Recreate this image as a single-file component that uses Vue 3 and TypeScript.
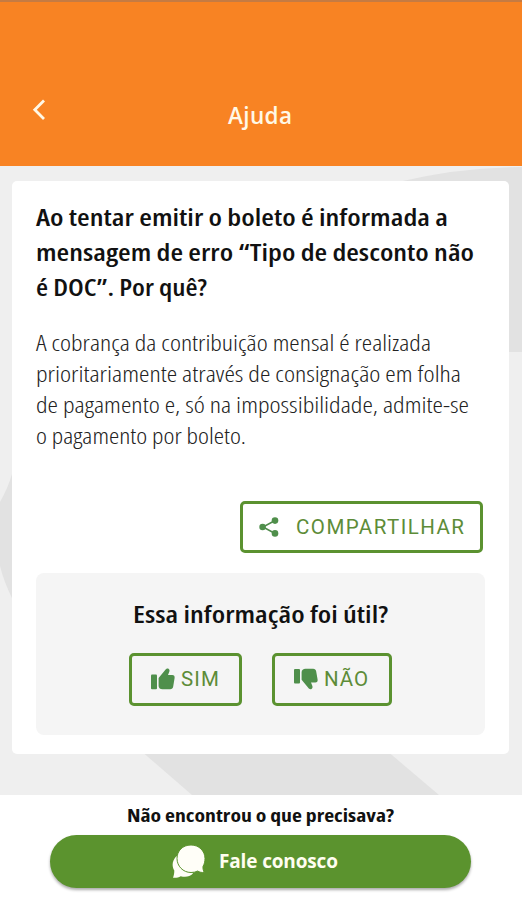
<script setup lang="ts">
interface Line {
  text: string
  width: number
}

const title: Line[] = [
  { text: 'Ao tentar emitir o boleto é informada a', width: 412 },
  { text: 'mensagem de erro “Tipo de desconto não', width: 438 },
  { text: 'é DOC”. Por quê?', width: 171 },
]

const answer: Line[] = [
  { text: 'A cobrança da contribuição mensal é realizada', width: 395 },
  { text: 'prioritariamente através de consignação em folha', width: 425 },
  { text: 'de pagamento e, só na impossibilidade, admite-se', width: 433 },
  { text: 'o pagamento por boleto.', width: 210 },
]
</script>

<template>
  <div class="screen">
    <header class="header">
      <button class="back" aria-label="Voltar">
        <svg width="14" height="24" viewBox="0 0 14 24">
          <path d="M12 2.500 2.800 11.700l9.200 9.200" fill="none" stroke="#fff8e6" stroke-width="2.800" />
        </svg>
      </button>
      <svg class="label name" width="66" height="32">
        <text x="0" y="22" textLength="64">Ajuda</text>
      </svg>
    </header>

    <main class="content">
      <svg class="backdrop" width="522" height="629" viewBox="0 0 522 629">
        <path d="M398 16Q460 1 522 1V186H398Z" />
        <path d="M0 336Q8 322 12 308V432Q4 416 0 400Z" />
        <path d="M140 584H386L439 629H192Z" />
      </svg>

      <article class="card">
        <h1 class="title">
          <svg v-for="line in title" :key="line.text" class="label" width="449" height="35">
            <text x="0" y="25" :textLength="line.width" lengthAdjust="spacingAndGlyphs">{{ line.text }}</text>
          </svg>
        </h1>
        <p class="answer">
          <svg v-for="line in answer" :key="line.text" class="label" width="449" height="30.9">
            <text x="0" y="22" :textLength="line.width" lengthAdjust="spacingAndGlyphs">{{ line.text }}</text>
          </svg>
        </p>

        <button class="outline share">
          <svg width="20" height="20" viewBox="0 0 20 20" class="icon">
            <path d="M16 3.5 4 10l12 6.500" fill="none" stroke="#4f8a4b" stroke-width="1.5" />
            <circle cx="16" cy="3.600" r="3.300" />
            <circle cx="3.600" cy="10" r="3.300" />
            <circle cx="16" cy="16.400" r="3.300" />
          </svg>
          <svg class="label" width="168" height="24">
            <text x="0" y="18.500" textLength="168">COMPARTILHAR</text>
          </svg>
        </button>

        <section class="feedback">
          <svg class="label question" width="256" height="34">
            <text x="0" y="25" textLength="255" lengthAdjust="spacingAndGlyphs">Essa informação foi útil?</text>
          </svg>
          <div class="choices">
            <button class="outline yes">
              <svg class="icon" width="24" height="22" viewBox="0 0 24 22">
                <rect x="0" y="6.5" width="6" height="14.8" rx="1" />
                <path d="M7.6 10 14 2.200c1-1.500 2.400-2.200 3.500-1.500 1.300.8 1.200 2.200.6 3.500L17 7h4.300c1.700 0 2.600 1.300 2.300 3l-1.400 8.500c-.3 1.700-1.400 2.700-3 2.700h-7.700c-2.200 0-3.900-1.300-3.900-3.300Z" />
              </svg>
              <svg class="label" width="38" height="24">
                <text x="0" y="18.500" textLength="38">SIM</text>
              </svg>
            </button>
            <button class="outline no">
              <svg class="icon" width="24" height="22" viewBox="0 0 24 22">
                <rect x="0" y="1" width="6" height="14.500" rx="1" />
                <path d="M7.600 11.800V4.200c0-2 1.700-3.400 3.900-3.400h7.700c1.600 0 2.700 1 3 2.700l1.400 8c.3 1.800-.6 3.100-2.300 3.100H17l1.200 2.800c.6 1.400.5 2.700-.7 3.500-1.200.7-2.500 0-3.500-1.400Z" />
              </svg>
              <svg class="label" width="44" height="24">
                <text x="0" y="18.500" textLength="44">NÃO</text>
              </svg>
            </button>
          </div>
        </section>
      </article>
    </main>

    <footer class="footer">
      <svg class="label hint" width="268" height="30">
        <text x="0" y="22" textLength="267" lengthAdjust="spacingAndGlyphs">Não encontrou o que precisava?</text>
      </svg>
      <button class="contact">
        <svg width="34" height="35" viewBox="0 0 34 35">
          <path class="bubble" d="M4.500 12C-.2 17-.2 22.500 2.300 26.500c0 2.800-.4 5-1.300 7.200 3.200.3 5.500-.3 7.700-1.500 5 1.300 9 .5 12.300-2.700Z" />
          <path class="bubble front" d="M19 1C10.500 1 5 7 5 14.500S11 28.500 19 28.500c2.500 0 4.800-.5 6.700-1.500 1.700 1.200 4 1.700 6.600 1.400-1-1.700-1.500-3.800-1.300-6 1.300-2.200 2-4.800 2-7.900C33 7 27 1 19 1Z" />
        </svg>
        <svg class="label" width="120" height="30">
          <text x="0" y="21" textLength="119">Fale conosco</text>
        </svg>
      </button>
    </footer>
  </div>
</template>

<style>
body {
  margin: 0;
}
</style>

<style scoped>
.screen {
  width: 522px;
  height: 900px;
  display: flex;
  flex-direction: column;
  overflow: hidden;
  background: #fff;
  font-family: "Open Sans", "Noto Sans", sans-serif;
}
button {
  display: flex;
  align-items: center;
  box-sizing: border-box;
  margin: 0;
  padding: 0;
  border: 0;
  background: none;
  font: inherit;
}
svg {
  display: block;
  flex: none;
}
.label {
  overflow: visible;
}
.header {
  box-sizing: border-box;
  height: 166px;
  border-top: 2px solid #c57b43;
  background: #f88323;
  display: flex;
  align-items: flex-start;
}
.back {
  margin: 96px 0 0 32px;
}
.name {
  margin: 100px 0 0 182px;
  font-size: 22.5px;
  font-weight: 600;
  font-stretch: 88%;
  fill: #fff8e6;
}
.content {
  position: relative;
  box-sizing: border-box;
  height: 629px;
  padding: 15px 13px 0 12px;
  background: #efefef;
}
.backdrop {
  position: absolute;
  inset: 0;
  fill: #e2e2e2;
}
.card {
  position: relative;
  box-sizing: border-box;
  height: 573px;
  padding: 20px 24px 0;
  border-radius: 5px;
  background: #fff;
  display: flex;
  flex-direction: column;
}
.title {
  margin: 0;
  font-size: 23.5px;
  font-weight: 600;
  font-stretch: 75%;
  fill: #111;
}
.answer {
  margin: 23px 0 0;
  font-size: 21.5px;
  font-weight: 300;
  font-stretch: 75%;
  fill: #222;
}
.outline {
  height: 53px;
  border: 3px solid #5b9230;
  border-radius: 5px;
  font-family: Roboto, sans-serif;
  font-size: 20.5px;
  font-weight: 400;
  fill: #5d8c38;
}
.icon {
  fill: #4f8f4b;
}
.share {
  align-self: flex-end;
  width: 243px;
  height: 52px;
  margin: 48.4px 2px 0 0;
  padding-left: 16px;
  gap: 17px;
}
.feedback {
  height: 162px;
  margin-top: 20px;
  border-radius: 8px;
  background: #f5f5f5;
  display: flex;
  flex-direction: column;
  align-items: center;
}
.question {
  margin-top: 25px;
  font-size: 23.5px;
  font-weight: 600;
  font-stretch: 75%;
  fill: #111;
}
.choices {
  display: flex;
  gap: 30px;
  margin-top: 21px;
}
.yes {
  width: 113px;
  padding-left: 19px;
  gap: 6px;
}
.no {
  width: 120px;
  padding-left: 19px;
  gap: 6px;
}
.footer {
  flex: 1;
  background: #fff;
  display: flex;
  flex-direction: column;
  align-items: center;
}
.hint {
  margin-top: 5px;
  font-size: 18.5px;
  font-weight: 700;
  font-stretch: 75%;
  fill: #111;
}
.contact {
  width: 421px;
  height: 53px;
  margin: 5px 1px 0 0;
  padding-left: 122px;
  gap: 13px;
  border-radius: 27px;
  background: #5b932e;
  box-shadow: 0 2px 3px #0005;
  font-size: 19px;
  font-weight: 700;
  font-stretch: 88%;
}
.contact .label {
  fill: #fffef0;
}
.bubble {
  fill: #fffef8;
}
.front {
  stroke: #5b932e;
  stroke-width: 1;
}
</style>
